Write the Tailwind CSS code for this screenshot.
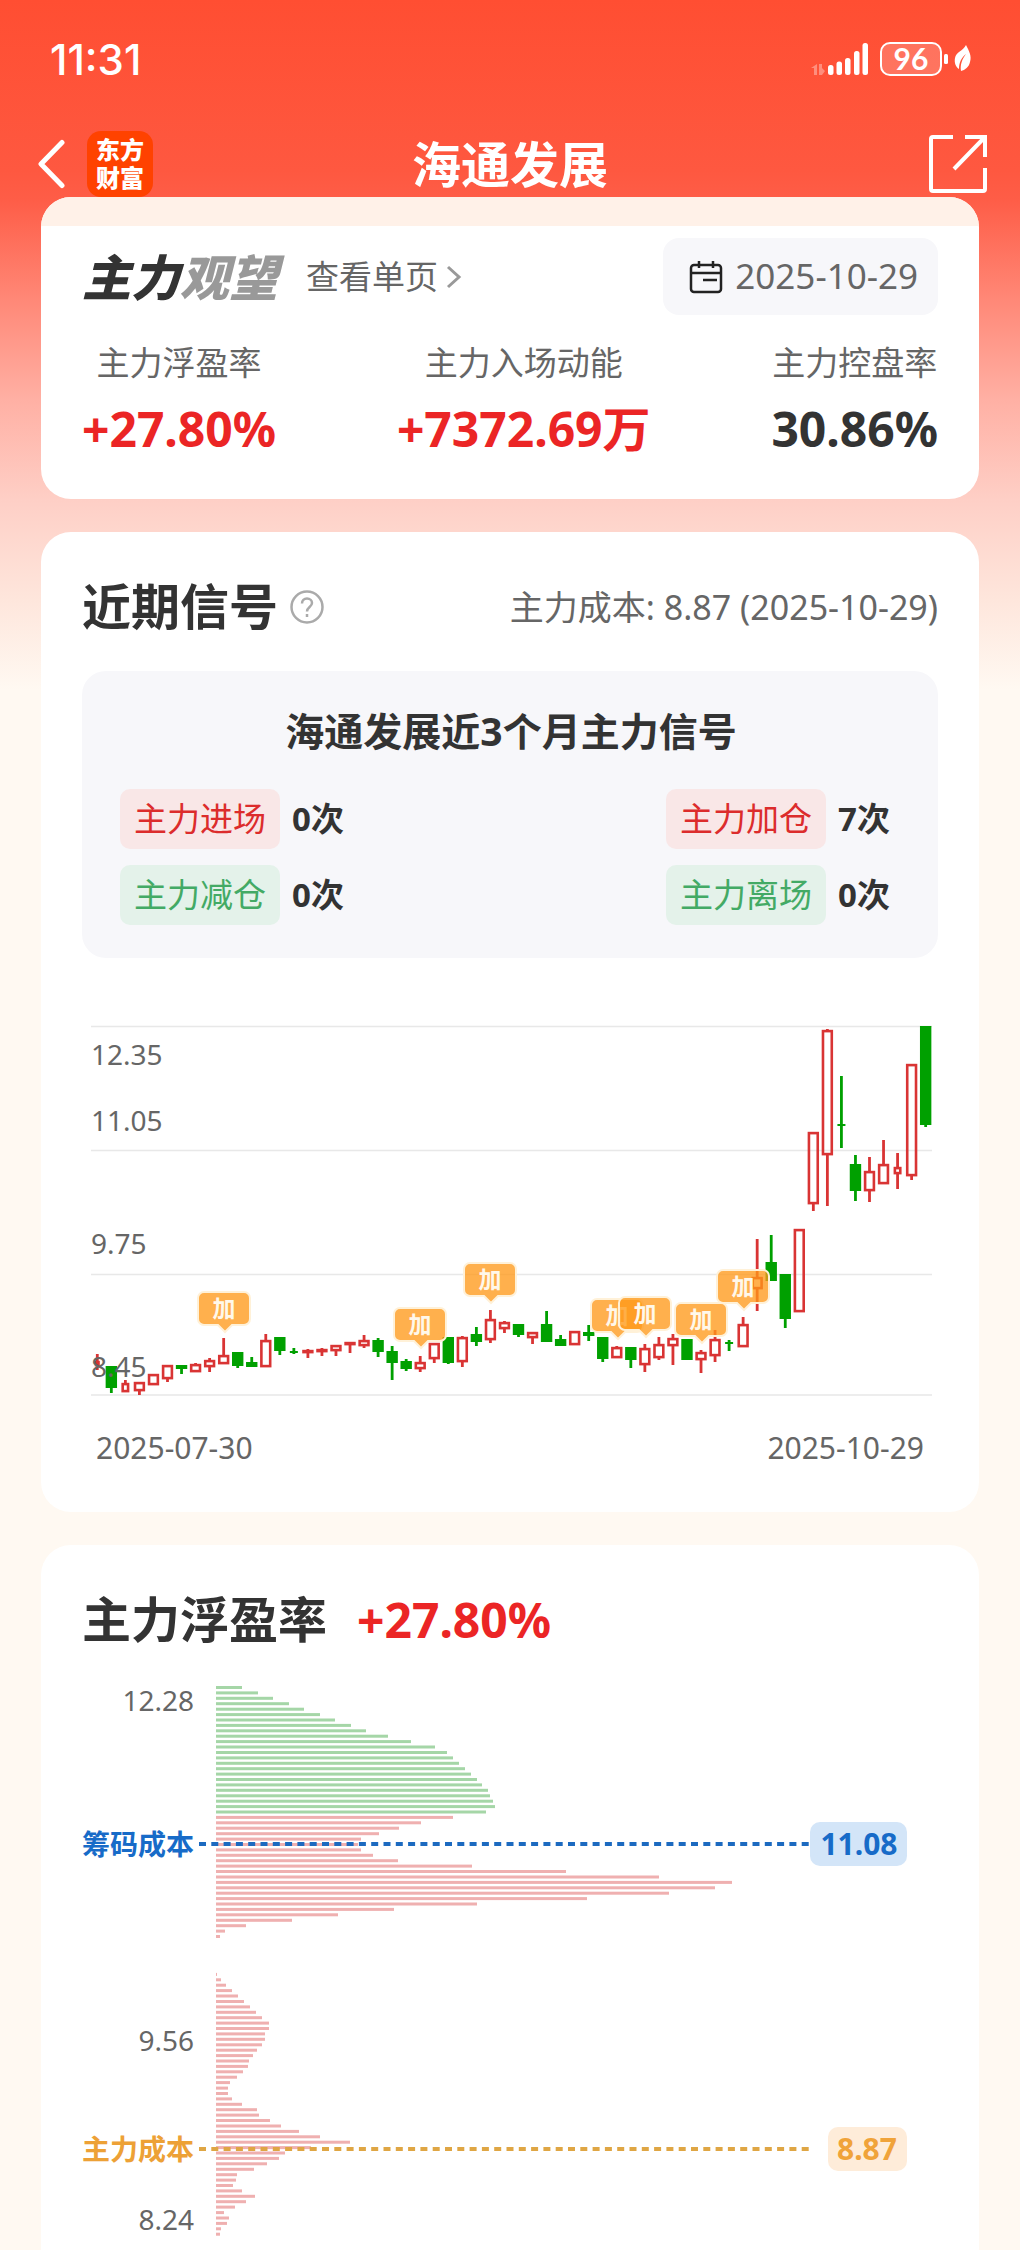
<!DOCTYPE html>
<html lang="zh-CN">
<head>
    <meta charset="UTF-8">
    <meta name="viewport" content="width=device-width, initial-scale=1.0">
    <title>海通发展 - 主力观望</title>
    <!-- Tailwind CSS CDN -->
    <script src="https://cdn.jsdelivr.net/npm/@tailwindcss/browser@4"></script>
</head>
<body class="bg-[#fff9f2] font-['Noto_Sans','Noto_Sans_CJK_SC',sans-serif] text-[#333333]">
    <div class="bg-[linear-gradient(to_bottom,#ff4e32_0px,#fe5840_170px,#fe5d47_200px,#ff8877_300px,#ffb0a4_400px,#fecfc6_500px,#fee6dc_600px,#fff9f2_690px)] overflow-hidden">

        <!-- Status Bar -->
        <div class="flex items-center justify-between h-[131px] pl-[50px] pr-12 pb-3 text-white">
            <span class="font-['Inter',sans-serif] font-medium text-[42px] leading-none">11:31</span>
            <svg class="w-[162px] h-9 overflow-visible" viewBox="0 0 162 36" fill="#fff" aria-hidden="true">
                <path d="M7 22v11H4v-7H1z M9 22h3v4l3 3-3 4H9z" opacity="0.35"/>
                <rect x="18" y="23" width="5.500" height="10" rx="2.500"/>
                <rect x="26.500" y="19.500" width="5.500" height="13.500" rx="2.500"/>
                <rect x="35" y="16" width="5.500" height="17" rx="2.500"/>
                <rect x="44" y="9" width="5.500" height="24" rx="2.500"/>
                <rect x="52.500" y="1" width="5.500" height="32" rx="2.500"/>
                <rect x="71" y="1" width="60" height="32" rx="9" fill="#fff" fill-opacity="0.2" stroke="#fff" stroke-width="2"/>
                <text x="101" y="28" text-anchor="middle" font-family="Lato, sans-serif" font-weight="700" font-size="30">96</text>
                <rect x="134" y="12" width="4" height="10" rx="1.500"/>
                <path d="M156 3c3 6 6 11 4 17-1 5-5 8-9 9-1-6 1-12 5-17-5 4-7 9-7 15-3-2-5-6-4-11 1-6 8-7 11-13z"/>
            </svg>
        </div>

        <!-- Nav Bar -->
        <header class="flex items-center h-[66px] px-8 text-white">
            <div class="flex-1 flex items-center gap-5">
                <button aria-label="返回" class="pl-[5px] cursor-pointer">
                    <svg class="w-[30px] h-[50px]" viewBox="0 0 30 50" fill="none" stroke="#fff" stroke-width="5" stroke-linecap="round" stroke-linejoin="round"><path d="M25 3.500 L4 25 L25 46.500"/></svg>
                </button>
                <a href="#" class="flex flex-col items-center justify-center w-[66px] h-[66px] rounded-[14px] bg-[#ff4200] font-black text-[24px] leading-7"><span>东方</span><span>财富</span></a>
            </div>
            <h1 class="font-bold text-[49px] leading-[66px]">海通发展</h1>
            <div class="flex-1 flex justify-end">
                <button aria-label="分享" class="cursor-pointer">
                    <svg class="w-[60px] h-[60px]" viewBox="0 0 60 60" fill="none" stroke="#fff" stroke-width="4"><path d="M25 3H5a2 2 0 0 0-2 2V55a2 2 0 0 0 2 2H55a2 2 0 0 0 2-2V34"/><path d="M37 3H57V23 M57 3L26 35"/></svg>
                </button>
            </div>
        </header>

        <main class="px-[41px]">
            <!-- Summary -->
            <section class="bg-white rounded-[30px] overflow-hidden">
                <div class="h-[29px] bg-[#fff1e8]"></div>
                <div class="px-[41px] pt-3 pb-10">
                    <div class="flex items-center">
                        <h2 class="font-black italic text-[49px] leading-[60px]">主力<span class="text-[#999999]">观望</span></h2>
                        <a href="#" class="flex items-center gap-2 ml-7 text-[33px] leading-[48px] text-[#666666]">查看单页
                            <svg class="w-4 h-6" viewBox="0 0 16 24" fill="none" stroke="#999" stroke-width="3"><path d="M2 2l11 10L2 22"/></svg>
                        </a>
                        <button class="flex items-center gap-3 h-[77px] ml-auto pl-[26px] pr-5 rounded-2xl bg-[#f7f7fa] text-[#666666] text-[35px] cursor-pointer">
                            <svg class="w-[34px] h-[34px]" viewBox="0 0 34 34" fill="none" stroke="#222" stroke-width="2.500"><rect x="2" y="5" width="30" height="27" rx="3"/><path d="M2 13H32 M10 1V8 M24 1V8 M14 20H28"/></svg>
                            2025-10-29
                        </button>
                    </div>
                    <dl class="flex justify-between mt-6 text-center">
                        <div>
                            <dt class="text-[33px] leading-[48px] text-[#666666]">主力浮盈率</dt>
                            <dd class="mt-3 font-bold text-[48px] leading-[60px] text-[#eb2525]">+27.80%</dd>
                        </div>
                        <div>
                            <dt class="text-[33px] leading-[48px] text-[#666666]">主力入场动能</dt>
                            <dd class="mt-3 font-bold text-[48px] leading-[60px] text-[#eb2525]">+7372.69万</dd>
                        </div>
                        <div>
                            <dt class="text-[33px] leading-[48px] text-[#666666]">主力控盘率</dt>
                            <dd class="mt-3 font-bold text-[48px] leading-[60px]">30.86%</dd>
                        </div>
                    </dl>
                </div>
            </section>

            <!-- Recent Signals -->
            <section class="mt-[33px] px-[41px] pt-[38px] pb-11 bg-white rounded-[30px]">
                <div class="flex items-center h-[74px]">
                    <h2 class="font-bold text-[49px]">近期信号</h2>
                    <button aria-label="说明" class="ml-3 cursor-pointer">
                        <svg class="w-[34px] h-[34px]" viewBox="0 0 34 34" fill="none" stroke="#aaa" stroke-width="2.500"><circle cx="17" cy="17" r="15.500"/><path d="M12 13.500c0-3 2-5 5-5s5 2 5 4.500c0 4-5 4-5 8.500"/><path d="M17 24v3"/></svg>
                    </button>
                    <p class="ml-auto text-[34px] text-[#666666]">主力成本: 8.87 (2025-10-29)</p>
                </div>

                <div class="mt-[27px] pt-[30px] pb-[33px] pl-[38px] pr-12 rounded-3xl bg-[#f7f7fa]">
                    <h3 class="pl-3 text-center font-bold text-[39px] leading-[60px]">海通发展近3个月主力信号</h3>
                    <div class="flex justify-between mt-7 text-[33px] leading-[60px]">
                        <div class="flex flex-col gap-4">
                            <p class="flex gap-3"><span class="px-[14px] rounded-[10px] bg-[#f9e7e7] text-[#dc2c2c]">主力进场</span><b>0次</b></p>
                            <p class="flex gap-3"><span class="px-[14px] rounded-[10px] bg-[#e4f2ea] text-[#43aa65]">主力减仓</span><b>0次</b></p>
                        </div>
                        <div class="flex flex-col gap-4">
                            <p class="flex gap-3"><span class="px-[14px] rounded-[10px] bg-[#f9e7e7] text-[#dc2c2c]">主力加仓</span><b>7次</b></p>
                            <p class="flex gap-3"><span class="px-[14px] rounded-[10px] bg-[#e4f2ea] text-[#43aa65]">主力离场</span><b>0次</b></p>
                        </div>
                    </div>
                </div>

                <svg class="block w-full mt-[62px]" viewBox="0 0 856 380" role="img" aria-label="近3个月K线">
                    <path d="M9 6.500H850 M9 130.500H850 M9 254.500H850 M9 375H850" stroke="#e8e8e8" stroke-width="1.500"/>
                    <g id="candles"></g>
                    <g fill="#666" font-size="28">
                        <text x="9" y="45">12.35</text>
                        <text x="9" y="111">11.05</text>
                        <text x="9" y="234">9.75</text>
                        <text x="9" y="357">8.45</text>
                    </g>
                    <g id="markers"></g>
                </svg>
                <div class="flex justify-between mt-7 px-[14px] text-[30px] leading-10 text-[#666666]">
                    <span>2025-07-30</span>
                    <span>2025-10-29</span>
                </div>
            </section>

            <!-- Profit Rate -->
            <section class="mt-[33px] px-[41px] pt-[38px] bg-white rounded-t-[30px]">
                <div class="flex items-center h-[74px] gap-[30px]">
                    <h2 class="font-bold text-[49px]">主力浮盈率</h2>
                    <span class="font-bold text-[48px] text-[#eb2525]">+27.80%</span>
                </div>
                <svg class="block w-full mt-[23px]" viewBox="0 0 856 570" role="img" aria-label="筹码分布">
                    <g id="chips"></g>
                    <g fill="#666" font-size="28" text-anchor="end">
                        <text x="112" y="31">12.28</text>
                        <text x="112" y="371">9.56</text>
                        <text x="112" y="550">8.24</text>
                    </g>
                    <g font-size="28" font-weight="700" text-anchor="end">
                        <text x="112" y="175" fill="#176bc8">筹码成本</text>
                        <text x="112" y="480" fill="#eda136">主力成本</text>
                    </g>
                    <path d="M117 164H728" stroke="#1c6ac0" stroke-width="4" stroke-dasharray="7 5.300"/>
                    <path d="M117 469H731" stroke="#dfa644" stroke-width="4" stroke-dasharray="7 5.300"/>
                    <rect x="728" y="142" width="97" height="44" rx="10" fill="#d3e5f8"/>
                    <rect x="746" y="447" width="79" height="44" rx="10" fill="#feecd9"/>
                    <g font-size="30" font-weight="700" text-anchor="middle">
                        <text x="777" y="175" fill="#176bc8">11.08</text>
                        <text x="785" y="480" fill="#f0a33a">8.87</text>
                    </g>
                </svg>
            </section>
        </main>
    </div>

    <script>
        // [high, top, bottom, low, rising]
        const candles = [
            [334, 341, 346, 350, 1], [346, 346, 368, 373, 0], [360, 363, 372, 372, 1], [362, 362, 371, 375, 1],
            [354, 354, 365, 365, 1], [345, 345, 359, 362, 1], [345, 345, 349, 354, 0], [343, 344, 352, 352, 1],
            [338, 340, 347, 352, 1], [318, 335, 344, 344, 1], [332, 332, 346, 348, 0], [337, 342, 347, 347, 0],
            [314, 320, 347, 347, 1], [317, 317, 331, 335, 0], [328, 331, 333, 334, 0], [329, 330, 333, 338, 1],
            [328, 329, 332, 336, 1], [325, 325, 331, 336, 1], [322, 322, 325, 333, 1], [315, 320, 326, 328, 1],
            [318, 320, 332, 337, 0], [326, 331, 343, 360, 0], [339, 341, 349, 351, 0], [336, 342, 349, 352, 1],
            [323, 323, 339, 343, 1], [317, 317, 343, 344, 0], [316, 317, 342, 347, 1], [307, 314, 322, 326, 0],
            [290, 299, 320, 323, 1], [301, 302, 309, 313, 1], [304, 304, 315, 317, 0], [312, 312, 318, 324, 1],
            [291, 304, 322, 322, 0], [315, 319, 326, 326, 0], [311, 311, 325, 325, 1], [305, 312, 316, 321, 0],
            [317, 317, 339, 342, 0], [326, 327, 338, 338, 1], [327, 327, 340, 348, 0], [324, 328, 345, 352, 1],
            [317, 324, 338, 340, 1], [314, 318, 326, 345, 1], [319, 319, 340, 340, 0], [330, 332, 340, 353, 1],
            [310, 319, 336, 342, 1], [320, 322, 324, 331, 0], [297, 304, 327, 327, 1], [219, 257, 269, 291, 1],
            [215, 242, 261, 261, 0], [254, 254, 299, 308, 0], [209, 209, 292, 292, 1], [112, 112, 184, 191, 1],
            [9, 10, 135, 186, 1], [56, 104, 106, 128, 0], [135, 144, 171, 181, 0], [137, 151, 171, 182, 1],
            [120, 144, 164, 164, 1], [133, 147, 154, 169, 1], [44, 44, 156, 160, 1], [6, 6, 105, 107, 0]
        ];
        // days whose body is drawn narrower
        const narrow = [0, 2, 14, 45, 53, 57];

        let html = "";
        candles.forEach(([high, top, bottom, low, rising], i) => {
            const x = 15.3 + i * 14.04;
            const w = i === 0 ? 5 : narrow.includes(i) ? 8 : 11.4;
            const color = rising ? "#d93434" : "#00a000";
            html += `<path d="M${x} ${high}V${top} M${x} ${bottom}V${low}" stroke="${color}" stroke-width="2.8"/>`;
            if (rising) {
                html += `<rect x="${x - w / 2 + 1.3}" y="${top + 1.1}" width="${w - 2.6}" height="${Math.max(bottom - top - 2, 1)}" fill="none" stroke="${color}" stroke-width="2.6"/>`;
            } else {
                html += `<rect x="${x - w / 2}" y="${top}" width="${w}" height="${bottom - top}" fill="${color}"/>`;
            }
        });
        document.getElementById("candles").innerHTML = html;

        // "加" markers: [center x, top]
        const markers = [[142, 272], [338, 288], [408, 243], [535, 279], [563, 277], [619, 283], [661, 250]];
        document.getElementById("markers").innerHTML = markers.map(([x, y]) => `
            <g transform="translate(${x} ${y})">
                <path d="M-20 0H20a6 6 0 0 1 6 6V27a6 6 0 0 1-6 6H8L1 40L-6 33H-20a6 6 0 0 1-6-6V6a6 6 0 0 1 6-6z" fill="#ff9818" fill-opacity="0.77" stroke="#fff1d8" stroke-width="2"/>
                <text y="25" text-anchor="middle" font-size="23" font-weight="700" fill="#fff8ea">加</text>
            </g>`).join("");

        // Chip distribution, from the highest price to the lowest
        const chips = [
            26, 42, 57, 73, 88, 104, 119, 135, 150, 172, 195, 219, 231, 237, 243, 249, 255, 261, 266, 272, 274, 277, 279, 270,
            237, 205, 183, 163, 145, 142, 145, 157, 182, 256, 350, 443, 516, 499, 453, 371, 261, 178, 122, 76, 30, 9, 4,
            0, 0, 0, 0, 0, 0,
            1, 5, 10, 16, 22, 28, 34, 40, 46, 53, 53, 49, 49, 46, 41, 37, 33, 32, 27, 21, 14, 12, 12, 16, 26, 41, 43, 54, 65,
            83, 104, 134, 95, 69, 63, 51, 38, 21, 20, 17, 26, 39, 30, 19, 8, 13, 11, 5, 4
        ];
        document.getElementById("chips").innerHTML = chips.map((w, i) =>
            `<rect x="134" y="${(6 + i * 5.413).toFixed(1)}" width="${w}" height="3" fill="${i < 24 ? "#a5d6a7" : "#efb0b0"}"/>`
        ).join("");
    </script>
</body>
</html>
